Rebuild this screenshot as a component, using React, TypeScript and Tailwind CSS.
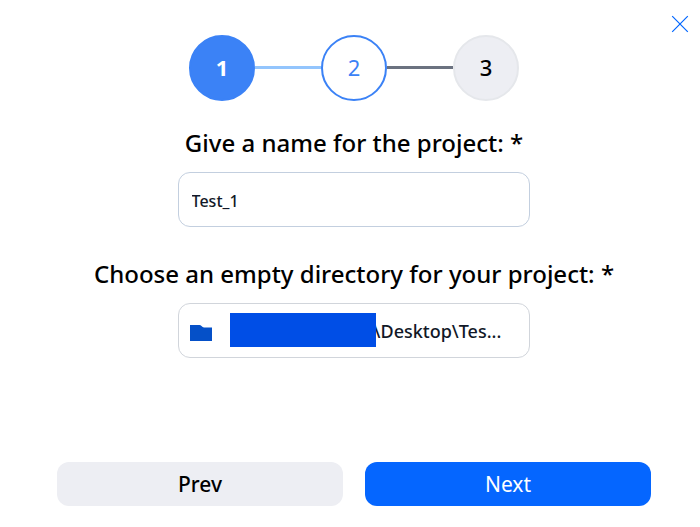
import { useState } from "react";

const steps = [
  { id: 1, cls: "border-[#3b82f6] bg-[#3b82f6] font-bold text-white" },
  { id: 2, cls: "border-[#3b82f6] bg-white text-[#3b82f6]" },
  { id: 3, cls: "border-[#e5e7eb] bg-[#edeef3] font-medium text-black" },
];

export default function App() {
  const [name, setName] = useState("Test_1");

  const labelCls = "text-center text-2xl font-medium leading-8";
  const fieldCls = "h-[55px] w-full rounded-xl border bg-white";
  const btnCls = "h-11 flex-1 rounded-xl pt-0.5 text-[21px]";

  return (
    <div className="relative min-h-screen bg-white font-['Noto_Sans','Open_Sans',sans-serif] text-black">
      <button type="button" aria-label="Close" className="absolute right-3 top-4 text-[#0066ff]">
        <svg width="16" height="16" viewBox="0 0 16 16" fill="none" stroke="currentColor" strokeWidth="1.2" overflow="visible">
          <path d="M0.200 0.200l15.600 15.600M15.800 0.200l-15.600 15.600" />
        </svg>
      </button>

      <form onSubmit={(e) => e.preventDefault()} className="flex flex-col items-center pl-2 pt-[35px]">
        <ol className="flex items-center">
          {steps.map((s) => (
            <li key={s.id} className="flex items-center">
              {s.id === 2 && <span className="mb-px h-[3px] w-[66px] bg-[#93c5fd]" />}
              {s.id === 3 && <span className="mb-px h-[3px] w-[66px] bg-[#6b7280]" />}
              <span className={`flex size-[66px] items-center justify-center rounded-full border-2 pb-0.5 text-[22px] ${s.cls}`}>
                {s.id}
              </span>
            </li>
          ))}
        </ol>

        <label htmlFor="name" className={`mt-[26px] ${labelCls}`}>Give a name for the project: *</label>
        <div className="mt-[13px] w-[51%]">
          <input
            id="name"
            value={name}
            onChange={(e) => setName(e.target.value)}
            className={`border-[#c3cfdf] px-[13px] pt-0.5 text-base font-medium text-[#111827] ${fieldCls}`}
          />
        </div>

        <label htmlFor="directory" className={`mt-[31px] ${labelCls}`}>Choose an empty directory for your project: *</label>
        <div className="mt-[13px] w-[51%]">
          <button id="directory" type="button" className={`flex items-center border-[#d1d5db] px-[11px] ${fieldCls}`}>
            <svg className="mt-1 shrink-0" width="22" height="16" viewBox="0 0 22 16" fill="#0550c8">
              <path d="M0 0h9.5q1 0 2 1t2.5 1.500H22V16H0z" />
            </svg>
            <span className="z-10 mb-px ml-[18px] h-[34px] w-[146px] shrink-0 bg-[#004ee6]" />
            <span className="-ml-0.5 text-lg font-medium text-[#111827]">\Desktop\Tes...</span>
          </button>
        </div>

        <div className="mt-[104px] flex w-full gap-[22px] px-[49px]">
          <button type="button" className={`bg-[#edeef3] font-medium ${btnCls}`}>Prev</button>
          <button type="submit" className={`bg-[#0566ff] text-white ${btnCls}`}>Next</button>
        </div>
      </form>
    </div>
  );
}
